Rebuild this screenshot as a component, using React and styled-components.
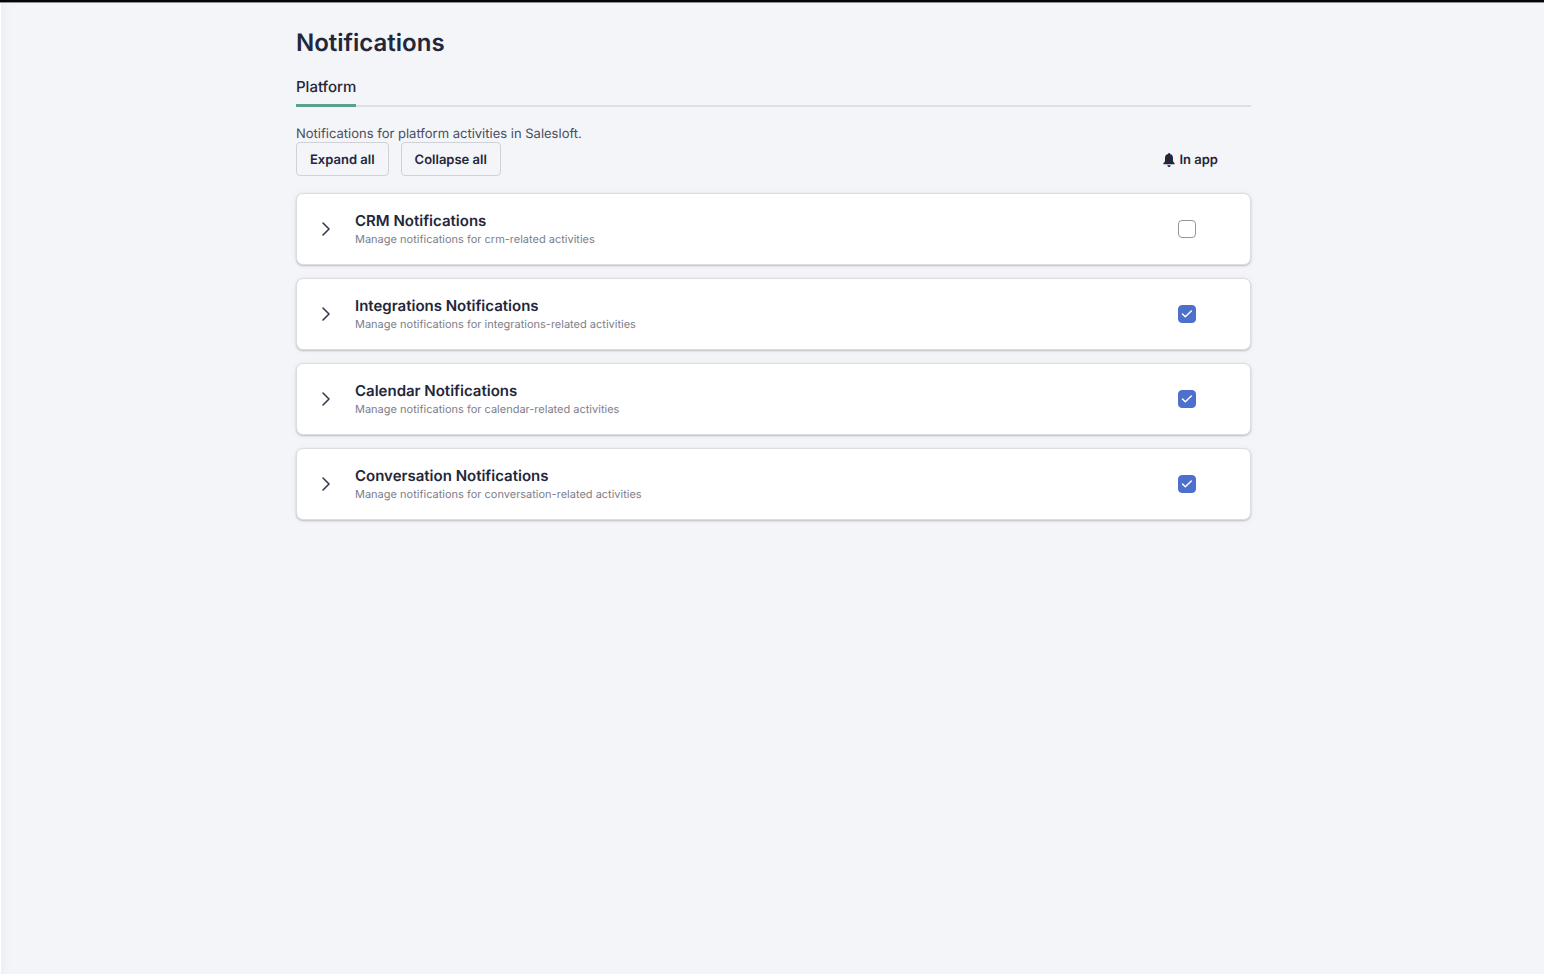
import React, { useState } from "react";
import styled, { createGlobalStyle } from "styled-components";

const GlobalStyle = createGlobalStyle`
  * {
    box-sizing: border-box;
  }

  body {
    margin: 0;
    background: #fff;
    color: #24263a;
    font-family: Inter, "Liberation Sans", sans-serif;
    text-rendering: geometricPrecision;
  }
`;

const Page = styled.div`
  min-height: calc(100vh - 4px);
  padding-left: 3px;
  border-top: 2px solid #05060c;
  background: #f3f5f9;
  box-shadow: inset 0 1px 0 #8d8f92, inset 1px 0 0 #fff,
    inset 10px 0 8px -6px #eceef2;
`;

const Content = styled.main`
  max-width: 955px;
  margin: 0 auto;
  padding: 25px 0;
`;

const Title = styled.h1`
  margin: 0;
  font-size: 24px;
  line-height: 32px;
  font-weight: 600;
`;

const Tabs = styled.div`
  display: flex;
  margin-top: 12px;
  border-bottom: 2px solid #dfe0e5;
`;

const Tab = styled.button`
  height: 36px;
  margin-bottom: -2px;
  padding: 0 0 3px;
  border: 0;
  border-bottom: 3px solid #58a08f;
  background: none;
  color: inherit;
  font-family: inherit;
  font-size: 15px;
  font-weight: 500;
  text-rendering: inherit;
  cursor: pointer;
`;

const Description = styled.p`
  margin: 19px 0 0;
  color: #4b4d5c;
  font-size: 13px;
  line-height: 16px;
`;

const Toolbar = styled.div`
  display: flex;
  align-items: center;
  justify-content: space-between;
  padding-right: 33px;
`;

const Actions = styled.div`
  display: flex;
  gap: 12px;
`;

const ActionButton = styled.button`
  height: 34px;
  padding: 1px 13px 0;
  border: 1px solid #d0d1d7;
  border-radius: 4px;
  background: transparent;
  color: inherit;
  font-family: inherit;
  font-size: 13px;
  font-weight: 600;
  text-rendering: inherit;
  cursor: pointer;
`;

const Channel = styled.div`
  display: flex;
  align-items: center;
  gap: 4px;
  padding-top: 1px;
  font-size: 13px;
  font-weight: 600;
`;

const CardList = styled.div`
  display: flex;
  flex-direction: column;
  gap: 13px;
  margin-top: 17px;
`;

const Card = styled.section`
  display: flex;
  align-items: center;
  min-height: 72px;
  padding: 0 54px 0 20px;
  border: 1px solid #dcdde3;
  border-radius: 7px;
  background: #fff;
  box-shadow: 0 1px 2px rgba(30, 32, 48, 0.24), 0 0 8px rgba(30, 32, 48, 0.04);
`;

const Chevron = styled.button`
  display: flex;
  width: 20px;
  height: 20px;
  margin-right: 18px;
  padding: 0;
  border: 0;
  background: none;
  color: #393b4d;
  cursor: pointer;

  svg {
    transform: ${({ $open }) => ($open ? "rotate(90deg)" : "none")};
  }
`;

const CardText = styled.div`
  flex: 1;
`;

const CardTitle = styled.h2`
  margin: 0;
  font-size: 15px;
  line-height: 20px;
  font-weight: 600;
`;

const CardHint = styled.p`
  margin: 0;
  color: #7c7e8a;
  font-size: 11px;
  line-height: 16px;
`;

const CheckLabel = styled.label`
  display: grid;
  cursor: pointer;

  input,
  svg {
    grid-area: 1 / 1;
  }

  svg {
    pointer-events: none;
  }
`;

const Checkbox = styled.input`
  appearance: none;
  width: 18px;
  height: 18px;
  margin: 0;
  border: 1px solid #94959f;
  border-radius: 4px;
  background: #fff;
  cursor: pointer;

  &:checked {
    border-color: #4d70cc;
    background: #4d70cc;
  }
`;

const groups = [
  { name: "CRM", hint: "Manage notifications for crm-related activities" },
  {
    name: "Integrations",
    hint: "Manage notifications for integrations-related activities",
    inApp: true,
  },
  {
    name: "Calendar",
    hint: "Manage notifications for calendar-related activities",
    inApp: true,
  },
  {
    name: "Conversation",
    hint: "Manage notifications for conversation-related activities",
    inApp: true,
  },
];

const BellIcon = () => (
  <svg width="12" height="14" viewBox="0 0 12 14" fill="currentColor">
    <path d="M6 0c-.6 0-1 .4-1 .9C3.100 1.300 2 2.800 2 4.800v2.700c0 1-.5 1.700-1.500 2.700-.4.400-.2 1.100.4 1.100h10.200c.6 0 .8-.7.4-1.100-1-1-1.500-1.700-1.500-2.700V4.800c0-2-1.100-3.500-3-3.900C7 .4 6.600 0 6 0z" />
    <path d="M4.300 12.200h3.400c-.1 1-.8 1.800-1.700 1.800s-1.600-.8-1.700-1.800z" />
  </svg>
);

const ChevronIcon = () => (
  <svg width="20" height="20" viewBox="0 0 20 20" fill="none">
    <path
      d="M6 4l6 6-6 6"
      stroke="currentColor"
      strokeWidth="1.600"
      strokeLinecap="round"
      strokeLinejoin="round"
    />
  </svg>
);

const CheckIcon = () => (
  <svg width="18" height="18" viewBox="0 0 18 18" fill="none">
    <path
      d="M4.500 9l2.800 2.800 6-5.800"
      stroke="#fff"
      strokeWidth="1.500"
      strokeLinecap="round"
      strokeLinejoin="round"
    />
  </svg>
);

const NotificationCard = ({ group, open, onToggle }) => {
  const [checked, setChecked] = useState(Boolean(group.inApp));
  const title = `${group.name} Notifications`;

  return (
    <Card>
      <Chevron $open={open} onClick={onToggle} aria-label={title} aria-expanded={open}>
        <ChevronIcon />
      </Chevron>
      <CardText>
        <CardTitle>{title}</CardTitle>
        <CardHint>{group.hint}</CardHint>
      </CardText>
      <CheckLabel>
        <Checkbox
          type="checkbox"
          aria-label={title}
          checked={checked}
          onChange={(e) => setChecked(e.target.checked)}
        />
        {checked && <CheckIcon />}
      </CheckLabel>
    </Card>
  );
};

export default function App() {
  const [opened, setOpened] = useState([]);

  const toggle = (name) =>
    setOpened(
      opened.includes(name)
        ? opened.filter((item) => item !== name)
        : [...opened, name]
    );

  return (
    <>
      <GlobalStyle />
      <Page>
        <Content>
          <Title>Notifications</Title>
          <Tabs role="tablist">
            <Tab role="tab" aria-selected="true">
              Platform
            </Tab>
          </Tabs>
          <Description>
            Notifications for platform activities in Salesloft.
          </Description>
          <Toolbar>
            <Actions>
              <ActionButton onClick={() => setOpened(groups.map((g) => g.name))}>
                Expand all
              </ActionButton>
              <ActionButton onClick={() => setOpened([])}>
                Collapse all
              </ActionButton>
            </Actions>
            <Channel>
              <BellIcon />
              In app
            </Channel>
          </Toolbar>
          <CardList>
            {groups.map((group) => (
              <NotificationCard
                key={group.name}
                group={group}
                open={opened.includes(group.name)}
                onToggle={() => toggle(group.name)}
              />
            ))}
          </CardList>
        </Content>
      </Page>
    </>
  );
}
